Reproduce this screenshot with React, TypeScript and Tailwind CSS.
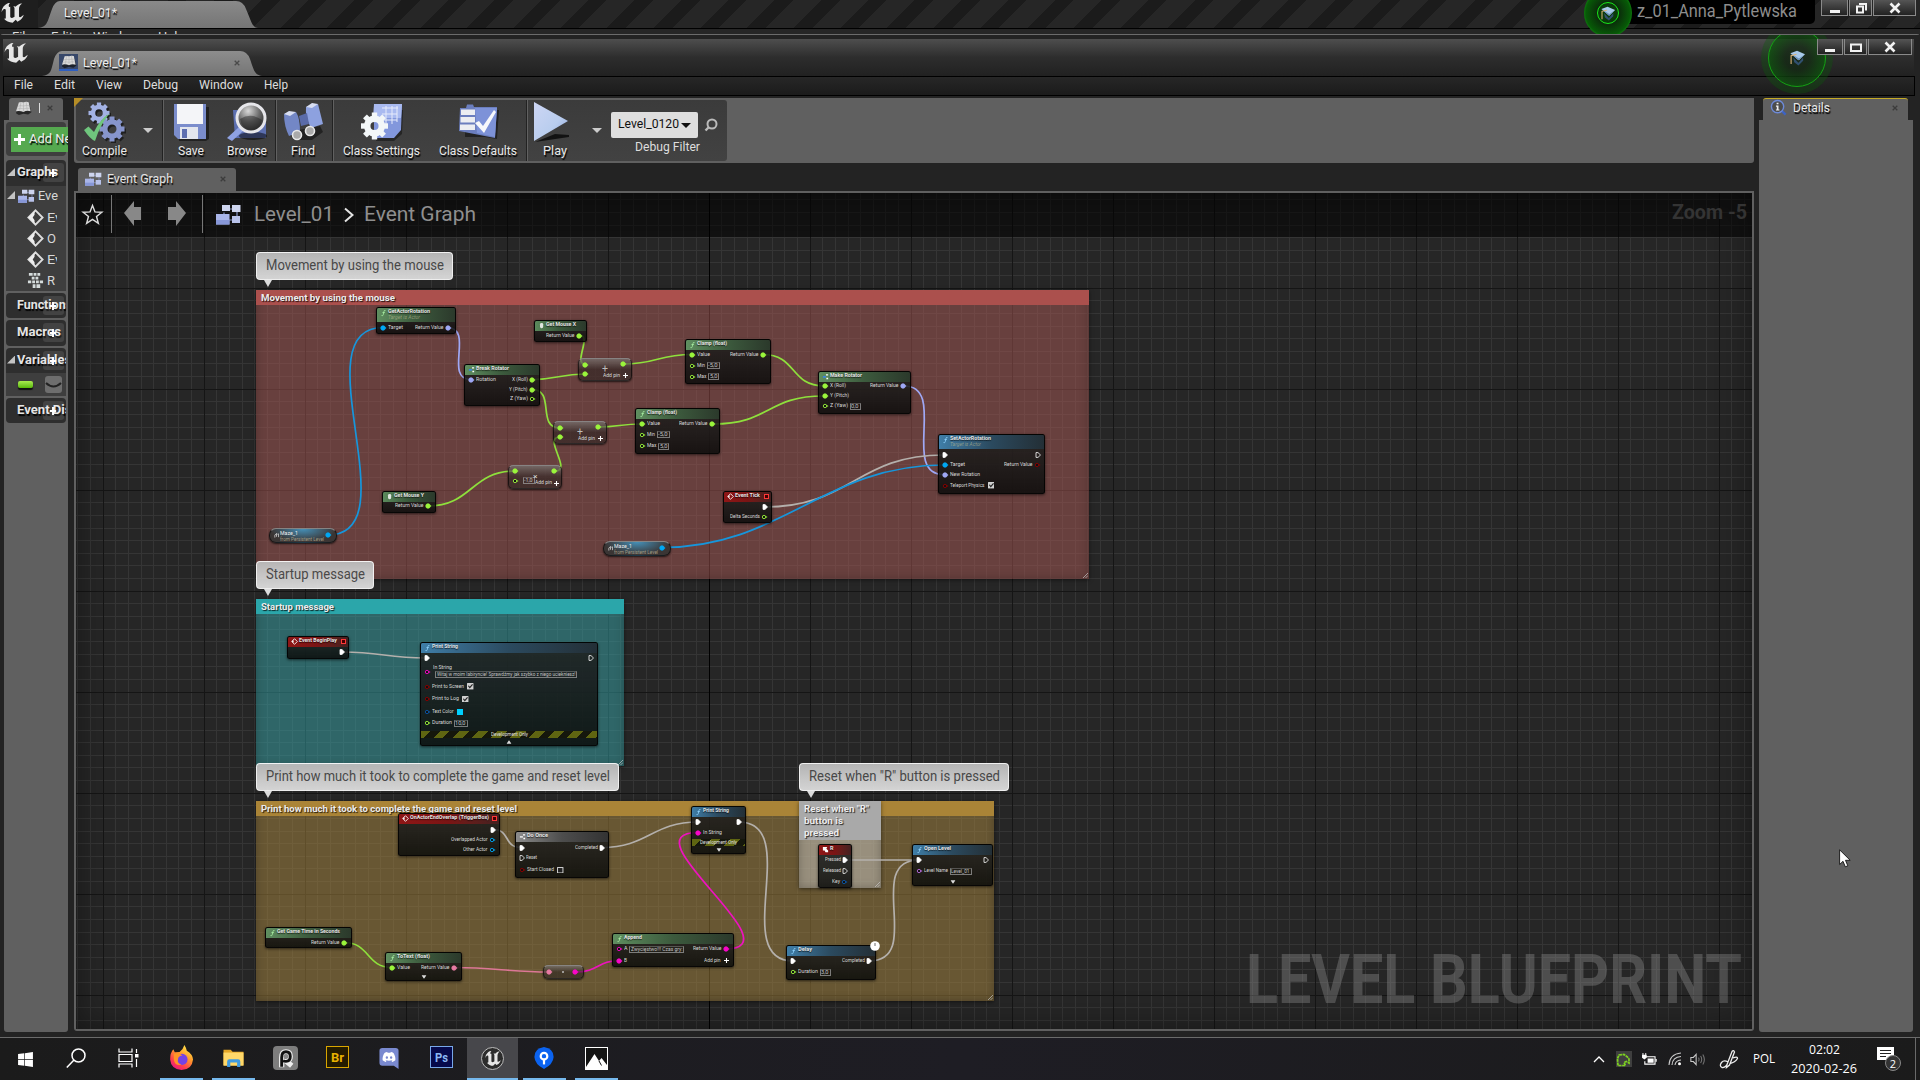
import React, { useLayoutEffect, useRef } from "react";
import { FaDiscord, FaWindows } from "react-icons/fa";

/* Text squeezed or stretched horizontally to an exact width. */
function Fit({ w, className = "", children }: { w: number; className?: string; children: React.ReactNode }) {
  const ref = useRef<HTMLSpanElement>(null);
  useLayoutEffect(() => {
    const el = ref.current;
    if (el && el.offsetWidth) {
      el.style.transform = `scaleX(${w / el.getBoundingClientRect().width})`;
    }
  }, [w]);
  return (
    <span className={"block shrink-0 leading-none " + className} style={{ width: w }}>
      <span ref={ref} className="inline-block origin-left whitespace-nowrap leading-none">
        {children}
      </span>
    </span>
  );
}

const SH = "[text-shadow:1px_2px_1px_#000]";
const GREEN = "#9bf53c";
const BLUE = "#00a8f4";
const LILAC = "#9fa8f5";
const RED = "#8b0000";
const MAGENTA = "#f907c8";
const PINK = "#e77ba3";
const WHITE = "#ffffff";
const NAVY = "#0b57a8";
const PURPLE = "#b96de0";

const U_PATH =
  "M19.13 13.729c-.206.997-1.126 3.557-4.06 4.942l-1.179-1.325-1.988 2a7.338 7.338 0 0 1-5.804-2.978 2.859 2.859 0 0 0 .65.123c.326.006.678-.114.678-.66v-5.394a.89.89 0 0 0-1.116-.89c-.92.212-1.656 2.509-1.656 2.509a7.304 7.304 0 0 1 2.528-5.597 7.408 7.408 0 0 1 3.73-1.721c-1.006.573-1.57 1.507-1.57 2.29 0 1.262.76 1.109.984.923v7.28a1.157 1.157 0 0 0 .148.256 1.075 1.075 0 0 0 .88.445c.76 0 1.747-.868 1.747-.868V9.172c0-.6-.452-1.324-.905-1.572 0 0 .838-.149 1.484.346a5.537 5.537 0 0 1 .387-.425c1.508-1.48 2.929-1.902 4.112-2.112 0 0-2.151 1.69-2.151 3.96 0 1.687.043 5.801.043 5.801.799.771 1.986-.342 3.059-1.441Z";

function ULogo({ className }: { className: string }) {
  return (
    <svg viewBox="4.3 5.2 15 14.4" className={className} preserveAspectRatio="none">
      <path d={U_PATH} fill="#e6e6e6" />
    </svg>
  );
}

function Cross({ className = "" }: { className?: string }) {
  return (
    <svg viewBox="0 0 6 6" className={"h-[6px] w-[6px] shrink-0 " + className}>
      <path d="M0.7 0.7L5.3 5.3M5.3 0.7L0.7 5.3" stroke="#3c3c3c" strokeWidth="1.3" />
    </svg>
  );
}

function BookIcon({ className }: { className: string }) {
  return (
    <svg viewBox="0 0 18 16" className={className}>
      <path d="M1 13L3.5 3L15 3L17.5 12L14 14.5L9 13.5L4 15Z" fill="#111" opacity=".7" />
      <path d="M1 11L4 1.5Q6.5 .5 9 1.5Q11.5 .3 14.5 1.2L16.6 11Q12.5 9.8 9 11.6Q5 10 1 11Z" fill="#dadada" />
      <path d="M9 1.5V11.4M3 5.5Q6 4.5 9 5.3Q12 4.3 15.4 5M2.2 8.5Q5.5 7.3 9 8.4Q12.5 7.2 16 8M6.3 1L4.8 10.3M11.8 1L13 10" stroke="#a8a8a8" strokeWidth=".5" fill="none" />
    </svg>
  );
}

function GraphIcon({ className }: { className: string }) {
  return (
    <svg viewBox="0 0 26 21" className={className}>
      <path d="M9 8.5V12M12 5H18M14 16H18M22 8V12" stroke="#8793c4" strokeWidth="1.2" />
      <path d="M7 1H15V7H7ZM17 1H25.500V8H17Z" fill="#cdd4ee" />
      <path d="M17 12H25V19H17Z" fill="#b8c2ea" />
      <path d="M1 10H14.500V20.500H1Z" fill="#a9b5e8" />
      <path d="M1 16H14.500V20.500H1Z" fill="#8797d8" />
    </svg>
  );
}

function Cap({ className }: { className: string }) {
  return (
    <svg viewBox="0 0 18 17" className={className}>
      <path d="M4.500 8L10 13.500L15 8V11.500L10 16.500L5.500 13Z" fill="#31506f" />
      <path d="M1.500 3.500L8.500 .8L17 4.500L10.500 11L9 10Z" fill="#a8c9ea" />
      <path d="M1.500 3.500L10 11L17 4.500L10.500 9Z" fill="#6b93bd" />
      <path d="M8 4.500L2.200 6V15" stroke="#d8b075" strokeWidth="1.200" fill="none" />
    </svg>
  );
}

function GearPath({ cx, cy, r, fill, n = 8, hole = 0.36 }: { cx: number; cy: number; r: number; fill: string; n?: number; hole?: number }) {
  const teeth = Array.from({ length: n }, (_, i) => (i * 360) / n);
  return (
    <g>
      {teeth.map((a) => (
        <rect key={a} x={cx - r * 0.2} y={cy - r} width={r * 0.4} height={r * 0.5} fill={fill} transform={`rotate(${a} ${cx} ${cy})`} />
      ))}
      <circle cx={cx} cy={cy} r={r * (0.39 + hole / 2)} fill="none" stroke={fill} strokeWidth={r * (0.78 - hole)} />
    </g>
  );
}

function CompileIcon() {
  return (
    <svg viewBox="0 0 44 42" className="h-[42px] w-[44px]">
      <g opacity=".5" transform="translate(1.500 2)">
        <GearPath cx={16} cy={12} r={10.500} fill="#000" />
        <GearPath cx={29} cy={28} r={12.500} fill="#000" />
      </g>
      <GearPath cx={16} cy={12} r={10.500} fill="#a3b2e4" />
      <GearPath cx={29} cy={28} r={12.500} fill="#8795cc" />
      <path d="M1 29L5.500 25.500L11 31Q17 18 26.500 12.500Q17 24 12 40Q7 38 1 29Z" fill="#6fc57d" />
    </svg>
  );
}
function SaveIcon() {
  return (
    <svg viewBox="0 0 36 38" className="h-[38px] w-[36px]">
      <path d="M3 4H36V36L33 38H6Z" fill="#000" opacity=".45" />
      <path d="M1 1H33V36H5L1 32Z" fill="#7b8dcc" />
      <path d="M4 1H30V21H4Z" fill="#f4f5f8" />
      <path d="M7 24H25V36H7Z" fill="#e3e6ee" />
      <path d="M9 26H14V35H9Z" fill="#5e6fb0" />
    </svg>
  );
}
function BrowseIcon() {
  return (
    <svg viewBox="0 0 42 40" className="h-[40px] w-[42px]">
      <defs>
        <radialGradient id="lens" cx=".4" cy=".25" r=".8">
          <stop offset="0" stopColor="#d8d8d8" />
          <stop offset=".5" stopColor="#6c6c6c" />
          <stop offset="1" stopColor="#222" />
        </radialGradient>
      </defs>
      <path d="M7 8H15L18 11H40V36H9Z" fill="#5c6fb0" />
      <ellipse cx="27" cy="34" rx="14" ry="4" fill="#000" opacity=".5" />
      <path d="M1 36L13 25L17 29L6 39Z" fill="#8fa2e2" />
      <circle cx="25" cy="16" r="14" fill="url(#lens)" stroke="#e6e6ea" strokeWidth="3" />
      <path d="M14 17Q25 10 36 18Q34 28 25 28Q16 28 14 17Z" fill="#222" opacity=".45" />
    </svg>
  );
}
function FindIcon() {
  return (
    <svg viewBox="0 0 42 40" className="h-[40px] w-[42px]">
      <path d="M6 30L38 24L41 30L30 38H12Z" fill="#000" opacity=".45" />
      <path d="M2 12L14 10Q18 16 18 30L7 34Q2 24 2 12Z" fill="#7387c6" />
      <path d="M24 5L36 2L41 22L29 26Q23 15 24 5Z" fill="#8da1df" />
      <path d="M17 14L25 11L27 22L19 24Z" fill="#5a6ba8" />
      <path d="M2 12L7 9L14 10L8 14ZM24 5L30 1L36 2L30 6Z" fill="#d8def2" />
      <circle cx="15" cy="33" r="4.500" fill="#aaa" stroke="#e9e9e9" strokeWidth="1.600" />
      <circle cx="28" cy="29" r="4.500" fill="#aaa" stroke="#e9e9e9" strokeWidth="1.600" />
    </svg>
  );
}
function SettingsIcon() {
  return (
    <svg viewBox="0 0 44 40" className="h-[40px] w-[44px]">
      <path d="M18 8H43L42 32L34 39H16Z" fill="#000" opacity=".4" />
      <path d="M14 2H42L41 28L34 36H14Z" fill="#8297dc" />
      <path d="M14 2H42L41 16H13Z" fill="#a9baf0" />
      <path d="M22 6H38M22 12H37M22 18H37M26 4V22M32 4V22M37 4V20" stroke="#e6ebfb" strokeWidth="1" />
      <GearPath cx={14.500} cy={24} r={13.500} fill="#f3f7f8" hole={0.3} />
    </svg>
  );
}
function DefaultsIcon() {
  return (
    <svg viewBox="0 0 42 40" className="h-[40px] w-[42px]">
      <path d="M8 8H42L40 37L28 35H8Z" fill="#000" opacity=".45" />
      <path d="M3 6H9L10 2.500H16L17 5H40L38 36L2 29Z" fill="#6b7ebe" />
      <path d="M18 6H40L38 35L20 31Z" fill="#7d92d8" />
      <path d="M4 7.500H18V13H4ZM3.500 15H18V20.500H3.500ZM3 22.500H18V28H3Z" fill="#eceef2" />
      <path d="M18 21L22 19L26 24L37 8L39 10L27 31Z" fill="#f7f8fb" />
    </svg>
  );
}
function PlayIcon() {
  return (
    <svg viewBox="0 0 38 42" className="-ml-[6px] h-[42px] w-[38px]">
      <defs>
        <linearGradient id="playg" x1="0" y1="0" x2="1" y2="1">
          <stop offset="0" stopColor="#cdd6f4" />
          <stop offset=".6" stopColor="#b9cdee" />
          <stop offset="1" stopColor="#8ea3dc" />
        </linearGradient>
      </defs>
      <path d="M2 41L36 36V34L22 33Z" fill="#000" opacity=".7" />
      <path d="M1 1L35 20L1 40Z" fill="url(#playg)" />
    </svg>
  );
}

function Tool({ w, label, lw, icon }: { w: number; label: string; lw: number; icon: React.ReactNode }) {
  return (
    <div className="flex h-full shrink-0 flex-col items-center" style={{ width: w }}>
      <div className="flex h-[43px] items-center justify-center pt-[1px]">{icon}</div>
      <Fit w={lw} className={"pt-[1px] text-[13.500px] text-[#e8e8e8] " + SH}>
        {label}
      </Fit>
    </div>
  );
}
function Sep() {
  return <div className="h-full w-[2px] shrink-0 border-l border-[#222] bg-[#616161]" />;
}
function Down({ className = "" }: { className?: string }) {
  return <div className={"h-0 w-0 border-x-[5px] border-t-[5px] border-x-transparent " + className} />;
}

/* ---------- node graph ---------- */

function Pin({ kind, c }: { kind: string; c: string }) {
  if (kind === "exec" || kind === "execo")
    return (
      <svg viewBox="0 0 6 6" className="h-[6px] w-[6px] shrink-0">
        <path d="M1 .6H3L5.500 3L3 5.400H1Z" fill={kind === "exec" ? "#fff" : "none"} stroke="#fff" strokeWidth=".8" />
      </svg>
    );
  return (
    <svg viewBox="0 0 7 6" className="h-[6px] w-[7px] shrink-0">
      <circle cx="3" cy="3" r={kind === "full" ? 2.200 : 1.700} fill={kind === "full" ? c : "#111"} stroke={c} strokeWidth=".9" />
      <path d="M5.200 2L6.500 3L5.200 4Z" fill={c} />
    </svg>
  );
}

function ValueBox({ text, w }: { text: string; w: number }) {
  return (
    <div className="flex h-[7px] items-center justify-center border border-[#a5a5a5]/70 border-t-[#a5a5a5]/40 text-[5px] text-[#c4c4c4]" style={{ width: w }}>
      <Fit w={w - 3.5}>{text}</Fit>
    </div>
  );
}

type Side = { k?: string; c?: string; t?: string; w?: number; box?: string; bw?: number; chk?: "on" | "off"; sw?: string; plus?: boolean };
type RowT = { y: number; l?: Side; r?: Side };
type NodeT = {
  x: number;
  y: number;
  w: number;
  h: number;
  hh?: number;
  kind: "pure" | "func" | "event" | "macro" | "input";
  title: string;
  tw: number;
  sub?: string;
  sw?: number;
  rows: RowT[];
  dev?: number;
  arrow?: { y: number; up?: boolean };
};

const HEAD: Record<string, string> = {
  pure: "bg-linear-to-r from-[#5f8f60] via-[#3c5a3d] to-[#2b392b]",
  input: "bg-linear-to-r from-[#5b8a5c] via-[#38573a] to-[#2b392b]",
  func: "bg-linear-to-r from-[#3f7ea8] via-[#2b4a5f] to-[#232f36]",
  event: "bg-linear-to-r from-[#8f1616] via-[#7a1414] to-[#432020]",
  macro: "bg-linear-to-r from-[#8c8c8c] via-[#4d4d4d] to-[#333]",
};

function HeadIcon({ kind, title }: { kind: string; title: string }) {
  if (title === "R")
    return (
      <svg viewBox="0 0 8 8" className="h-[7px] w-[7px]">
        <path d="M1 1H6L5 3L7 5V7H4L3 5H1Z" fill="#fff" />
      </svg>
    );
  if (kind === "event")
    return (
      <svg viewBox="0 0 8 8" className="h-[7px] w-[7px]">
        <path d="M4 .8L7.200 4L4 7.200L.8 4Z" fill="none" stroke="#fff" strokeWidth="1" />
        <path d="M3 2.500L.8 4L3 5.500Z" fill="#fff" />
      </svg>
    );
  if (kind === "input")
    return (
      <svg viewBox="0 0 8 8" className="h-[7px] w-[7px]">
        <rect x="2.300" y="1" width="3.600" height="6" rx="1.700" fill="#dfe6e0" />
      </svg>
    );
  if (kind === "macro" || title.includes("Rotator"))
    return (
      <svg viewBox="0 0 8 8" className="h-[7px] w-[7px]">
        <path d="M4.500 1.500H7V2.800H4.500Z" fill="#fff" />
        <path d="M1 3.500H4.500V5.500H1Z" fill={kind === "macro" ? "#ddd" : "#3d86e0"} />
        <path d="M5 5.500H7V7H5Z" fill="#fff" />
      </svg>
    );
  return (
    <svg viewBox="0 0 8 8" className="h-[8px] w-[7px]">
      <path d="M6.300 1.200Q4.600 .4 4.400 2.600L3.700 6Q3.400 7.600 1.700 6.900M2.800 3.500H5.600" fill="none" stroke={kind === "func" ? "#8fd4ff" : "#a9f0a3"} strokeWidth=".9" />
    </svg>
  );
}

function Label({ s }: { s: Side }) {
  return s.t ? (
    <Fit w={s.w ?? 10} className="text-[5.800px] text-[#dadada]">
      {s.t}
    </Fit>
  ) : null;
}

function NodeBox({ n }: { n: NodeT }) {
  const hh = n.hh ?? 9.5;
  let bottom = hh + 1;
  return (
    <div
      className="absolute overflow-hidden rounded-[2.500px] border border-black/80 bg-[#0b0c0a]/85 bg-linear-to-b from-white/8 to-transparent shadow-[0_1px_3px_rgba(0,0,0,0.6)]"
      style={{ left: n.x, top: n.y, width: n.w, height: n.h }}
    >
      <div className={"flex items-start pl-[3px] " + HEAD[n.kind]} style={{ height: hh }}>
        <div className="pt-[1px]">
          <HeadIcon kind={n.kind} title={n.title} />
        </div>
        <div className="flex grow flex-col pt-[0.500px] pl-[1px]">
          <Fit w={n.tw} className="text-[5.900px] font-bold text-[#e4e4e4] [text-shadow:0_1px_1px_rgba(0,0,0,0.7)]">
            {n.title}
          </Fit>
          {n.sub && (
            <Fit w={n.sw ?? 30} className="mt-[1px] text-[5.600px] text-[#b5b58c]/70 italic">
              {n.sub}
            </Fit>
          )}
        </div>
        {n.kind === "event" && n.title !== "R" && <div className="mt-[2px] mr-[2px] h-[5px] w-[5px] border border-[#ff3838] bg-[#400]" />}
      </div>
      {n.rows.map((r, i) => {
        const top = r.y - n.y - 4;
        const mt = top - bottom;
        bottom = top + 8;
        return (
          <div key={i} className="flex h-[8px] items-center justify-between pr-[3.500px] pl-[2.500px]" style={{ marginTop: mt }}>
            <div className="flex items-center gap-[1.500px]">
              {r.l && (
                <>
                  {r.l.k && <Pin kind={r.l.k} c={r.l.c ?? WHITE} />}
                  <Label s={r.l} />
                  {r.l.box && <ValueBox text={r.l.box} w={r.l.bw ?? 12} />}
                  {r.l.sw && <div className="ml-[1.500px] h-[6px] w-[6px]" style={{ background: r.l.sw }} />}
                  {r.l.chk && (
                    <svg viewBox="0 0 7 7" className="ml-[1.500px] h-[6.500px] w-[6.500px]">
                      <rect x=".6" y=".6" width="5.800" height="5.800" fill={r.l.chk === "on" ? "#ccc" : "#222"} stroke="#ddd" strokeWidth="1" />
                      {r.l.chk === "on" && <path d="M1.500 3L3 5L6 1.500" fill="none" stroke="#222" strokeWidth="1.200" />}
                    </svg>
                  )}
                </>
              )}
            </div>
            <div className="flex items-center gap-[1px]">
              {r.r && (
                <>
                  <Label s={r.r} />
                  {r.r.k && <Pin kind={r.r.k} c={r.r.c ?? WHITE} />}
                  {r.r.plus && <Plus />}
                </>
              )}
            </div>
          </div>
        );
      })}
      {n.dev && (
        <div
          className="absolute inset-x-0 flex h-[7px] items-center justify-center bg-[repeating-linear-gradient(135deg,#5f6511_0_7px,#15170c_7px_13.500px)]"
          style={{ top: n.dev - n.y - 1 }}
        >
          <Fit w={37} className="text-[5.400px] text-[#e0e0e0]">
            Development Only
          </Fit>
        </div>
      )}
      {n.arrow && (
        <svg viewBox="0 0 6 4" className="absolute left-1/2 h-[4px] w-[5px] -translate-x-1/2" style={{ top: n.arrow.y - n.y - 3 }}>
          <path d={n.arrow.up ? "M0 4L3 0L6 4Z" : "M0 0H6L3 4Z"} fill="#ddd" />
        </svg>
      )}
    </div>
  );
}

function Plus() {
  return (
    <svg viewBox="0 0 6 6" className="mr-[1px] ml-[2px] h-[5px] w-[5px] shrink-0">
      <path d="M3 0V6M0 3H6" stroke="#fff" strokeWidth="1.300" />
    </svg>
  );
}

const RV = (c: string): Side => ({ k: "full", c, t: "Return Value", w: 28.5 });

const NODES: NodeT[] = [
  { x: 376, y: 307, w: 80, h: 27, hh: 14, kind: "pure", title: "GetActorRotation", tw: 42, sub: "Target is Actor", sw: 32, rows: [{ y: 327.5, l: { k: "full", c: BLUE, t: "Target", w: 15 }, r: RV(LILAC) }] },
  { x: 534, y: 320, w: 53, h: 22, kind: "input", title: "Get Mouse X", tw: 30, rows: [{ y: 335.5, r: RV(GREEN) }] },
  { x: 464, y: 364, w: 76, h: 42, kind: "pure", title: "Break Rotator", tw: 33, rows: [
    { y: 379.5, l: { k: "full", c: LILAC, t: "Rotation", w: 20 }, r: { k: "full", c: GREEN, t: "X (Roll)", w: 16 } },
    { y: 389.5, r: { k: "full", c: GREEN, t: "Y (Pitch)", w: 18.500 } },
    { y: 399, r: { k: "open", c: GREEN, t: "Z (Yaw)", w: 18 } } ] },
  { x: 382, y: 491, w: 54, h: 22, kind: "input", title: "Get Mouse Y", tw: 30, rows: [{ y: 506, r: RV(GREEN) }] },
  { x: 685, y: 339, w: 86, h: 45, kind: "pure", title: "Clamp (float)", tw: 30, rows: [
    { y: 354.5, l: { k: "full", c: GREEN, t: "Value", w: 13 }, r: RV(GREEN) },
    { y: 365.5, l: { k: "open", c: GREEN, t: "Min", w: 8, box: "-5,0", bw: 13 } },
    { y: 376.5, l: { k: "open", c: GREEN, t: "Max", w: 9.500, box: "5,0", bw: 11 } } ] },
  { x: 635, y: 408, w: 85, h: 46, kind: "pure", title: "Clamp (float)", tw: 30, rows: [
    { y: 424, l: { k: "full", c: GREEN, t: "Value", w: 13 }, r: RV(GREEN) },
    { y: 434.5, l: { k: "open", c: GREEN, t: "Min", w: 8, box: "-5,0", bw: 13 } },
    { y: 446, l: { k: "open", c: GREEN, t: "Max", w: 9.500, box: "5,0", bw: 11 } } ] },
  { x: 818, y: 371, w: 93, h: 43, kind: "pure", title: "Make Rotator", tw: 32, rows: [
    { y: 386, l: { k: "full", c: GREEN, t: "X (Roll)", w: 16 }, r: RV(LILAC) },
    { y: 396, l: { k: "full", c: GREEN, t: "Y (Pitch)", w: 19 } },
    { y: 406, l: { k: "open", c: GREEN, t: "Z (Yaw)", w: 18, box: "0,0", bw: 11 } } ] },
  { x: 938, y: 434, w: 107, h: 60, hh: 13.5, kind: "func", title: "SetActorRotation", tw: 41, sub: "Target is Actor", sw: 31, rows: [
    { y: 455, l: { k: "exec" }, r: { k: "execo" } },
    { y: 465, l: { k: "full", c: BLUE, t: "Target", w: 15 }, r: { k: "open", c: RED, t: "Return Value", w: 28.5 } },
    { y: 474.5, l: { k: "full", c: LILAC, t: "New Rotation", w: 30 } },
    { y: 485.5, l: { k: "open", c: RED, t: "Teleport Physics", w: 34.5, chk: "on" } } ] },
  { x: 723, y: 491, w: 49, h: 32, kind: "event", title: "Event Tick", tw: 25, rows: [
    { y: 507, r: { k: "exec" } }, { y: 517, r: { k: "open", c: GREEN, t: "Delta Seconds", w: 30 } } ] },
  { x: 287, y: 636, w: 62, h: 23, kind: "event", title: "Event BeginPlay", tw: 38, rows: [{ y: 652, r: { k: "exec" } }] },
  { x: 420, y: 642, w: 178, h: 104, kind: "func", title: "Print String", tw: 26, dev: 731, arrow: { y: 742, up: true }, rows: [
    { y: 658, l: { k: "exec" }, r: { k: "execo" } },
    { y: 672, l: { k: "open", c: MAGENTA } },
    { y: 686.5, l: { k: "open", c: RED, t: "Print to Screen", w: 32, chk: "on" } },
    { y: 699, l: { k: "open", c: RED, t: "Print to Log", w: 27, chk: "on" } },
    { y: 711.5, l: { k: "open", c: NAVY, t: "Text Color", w: 21.5, sw: "#00d0ff" } },
    { y: 723, l: { k: "open", c: GREEN, t: "Duration", w: 20, box: "10,0", bw: 14 } } ] },
  { x: 398, y: 813, w: 102, h: 43, kind: "event", title: "OnActorEndOverlap (TriggerBox)", tw: 79, rows: [
    { y: 829.5, r: { k: "exec" } },
    { y: 839.5, r: { k: "open", c: BLUE, t: "Overlapped Actor", w: 36.5 } },
    { y: 849.5, r: { k: "open", c: BLUE, t: "Other Actor", w: 24.5 } } ] },
  { x: 515, y: 831, w: 94, h: 47, kind: "macro", title: "Do Once", tw: 21, rows: [
    { y: 847.5, l: { k: "exec" }, r: { k: "exec", t: "Completed", w: 23 } },
    { y: 858, l: { k: "execo", t: "Reset", w: 11 } },
    { y: 870, l: { k: "open", c: RED, t: "Start Closed", w: 27, chk: "off" } } ] },
  { x: 265, y: 927, w: 87, h: 21, kind: "pure", title: "Get Game Time in Seconds", tw: 63, rows: [{ y: 942.5, r: RV(GREEN) }] },
  { x: 385, y: 952, w: 77, h: 29, kind: "pure", title: "ToText (float)", tw: 33, arrow: { y: 977 }, rows: [{ y: 967.5, l: { k: "full", c: GREEN, t: "Value", w: 13 }, r: RV(PINK) }] },
  { x: 612, y: 933, w: 122, h: 34, kind: "pure", title: "Append", tw: 18, rows: [
    { y: 949, l: { k: "open", c: MAGENTA, t: "A", w: 3.5, box: "Zwycięstwo!!! Czas gry:", bw: 55 }, r: RV(MAGENTA) },
    { y: 960.5, l: { k: "full", c: MAGENTA, t: "B", w: 3 }, r: { t: "Add pin", w: 16.5, plus: true } } ] },
  { x: 691, y: 806, w: 55, h: 48, kind: "func", title: "Print String", tw: 26, dev: 839, arrow: { y: 849.5 }, rows: [
    { y: 822, l: { k: "exec" }, r: { k: "exec" } },
    { y: 832.5, l: { k: "full", c: MAGENTA, t: "In String", w: 19 } } ] },
  { x: 818, y: 844, w: 34, h: 44, kind: "event", title: "R", tw: 3.5, rows: [
    { y: 860, r: { k: "exec", t: "Pressed", w: 16 } },
    { y: 871, r: { k: "execo", t: "Released", w: 18 } },
    { y: 881.5, r: { k: "open", c: NAVY, t: "Key", w: 8 } } ] },
  { x: 912, y: 844, w: 81, h: 42, kind: "func", title: "Open Level", tw: 27, arrow: { y: 882 }, rows: [
    { y: 860, l: { k: "exec" }, r: { k: "execo" } },
    { y: 871, l: { k: "open", c: PURPLE, t: "Level Name", w: 24, box: "Level_01", bw: 22 } } ] },
  { x: 786, y: 945, w: 90, h: 35, kind: "func", title: "Delay", tw: 14, rows: [
    { y: 961, l: { k: "exec" }, r: { k: "exec", t: "Completed", w: 23 } },
    { y: 972, l: { k: "open", c: GREEN, t: "Duration", w: 20, box: "3,0", bw: 11 } } ] },
];

const GREY = "#b4b0ac";
const LIME = "#8ee03c";
const WIRES: [number, number, number, number, number, string][] = [
  [328, 535, 383, 327.5, 84, "#1696dc"],
  [447, 327.5, 471, 379.5, 28, LILAC],
  [580, 335.5, 585, 364, 12, LIME],
  [532, 379.5, 585, 374, 25, LIME],
  [532, 389.5, 560, 428, 24, LIME],
  [555, 471, 560, 437, 18, LIME],
  [428, 506, 515, 471, 44, LIME],
  [623, 364, 692, 354.5, 35, LIME],
  [598, 427, 641, 424, 20, LIME],
  [763, 354.5, 824, 386, 34, LIME],
  [713, 424, 824, 396, 58, LIME],
  [904, 386, 944, 474.5, 44, LILAC],
  [764, 507, 944, 455, 88, GREY],
  [662, 547.5, 944, 465, 120, "#1696dc"],
  [342, 652, 426, 658, 40, GREY],
  [493, 829.5, 521, 847.5, 18, GREY],
  [602, 847.5, 698, 822, 46, GREY],
  [739, 822, 793, 961, 64, GREY],
  [725, 949, 698, 832.5, 74, "#ee12bf"],
  [845, 860, 919, 860, 20, GREY],
  [869, 961, 919, 860, 56, GREY],
  [344, 942.5, 392, 967.5, 26, LIME],
  [454, 967.5, 549, 972, 40, "#dc7796"],
  [576, 972, 620, 960.5, 22, "#ee12bf"],
];

function Grid() {
  const step = 12.625;
  const cols = Array.from({ length: 136 }, (_, i) => i - 51);
  const rows = Array.from({ length: 70 }, (_, i) => i - 8);
  return (
    <svg className="absolute inset-0 h-[1080px] w-[1920px]" shapeRendering="crispEdges">
      {cols.map((i) => (
        <rect key={"c" + i} x={Math.floor(709.2 + i * step)} y="193" width="1" height="840" fill={i % 8 === 0 ? "#151515" : "#353535"} />
      ))}
      {rows.map((i) => (
        <rect key={"r" + i} x="76" y={Math.floor(288.2 + i * step)} width="1680" height="1" fill={i % 8 === 0 ? "#151515" : "#353535"} />
      ))}
      {cols.filter((i) => i % 8 === 0).map((i) => (
        <rect key={"m" + i} x={Math.floor(709.2 + i * step)} y="193" width="1" height="840" fill={i === 0 ? "#000" : "#151515"} />
      ))}
    </svg>
  );
}

function Comment({ x, y, w, h, hh, title, tw, head, body }: { x: number; y: number; w: number; h: number; hh: number; title: string[]; tw: number[]; head: string; body: string }) {
  return (
    <div className={"absolute shadow-[inset_0_0_10px_rgba(0,0,0,0.25),0_1px_4px_rgba(0,0,0,0.5)] " + body} style={{ left: x, top: y, width: w, height: h }}>
      <div className={"flex flex-col gap-[2.500px] pt-[3px] pl-[4.500px] " + head} style={{ height: hh }}>
        {title.map((t, i) => (
          <Fit key={t} w={tw[i]} className="text-[9.500px] font-bold text-[#ececec] [text-shadow:1px_1px_1px_rgba(0,0,0,0.8)]">
            {t}
          </Fit>
        ))}
      </div>
      <svg viewBox="0 0 6 6" className="absolute right-[1px] bottom-[1px] h-[5px] w-[5px]">
        <path d="M0 6L6 0M3 6L6 3" stroke="#ccc" strokeWidth=".8" />
      </svg>
    </div>
  );
}

function Bubble({ x, y, w, h, tw, children }: { x: number; y: number; w: number; h: number; tw: number; children: string }) {
  return (
    <div className="absolute" style={{ left: x, top: y }}>
      <div className="flex items-center justify-center rounded-[4px] border border-white/90 bg-linear-to-b from-[#bcbcbc] to-[#dedede] opacity-95" style={{ width: w, height: h }}>
        <Fit w={tw} className="text-[14.500px] text-[#4a4a4a]">
          {children}
        </Fit>
      </div>
      <div className="ml-[8px] h-0 w-0 border-x-[4px] border-t-[7px] border-x-transparent border-t-[#dcdcdc]" />
    </div>
  );
}

type Spot = { x: number; y: number; w?: number; c?: string };
function At({ x, y, w, c = "#dadada", size = "text-[5.800px]", children }: Spot & { size?: string; children: string }) {
  return (
    <div className={"absolute flex -translate-y-1/2 items-center " + size} style={{ left: x, top: y, color: c }}>
      <Fit w={w ?? 10}>{children}</Fit>
    </div>
  );
}
function Capsule({ x, y, w, h, round, blue, children }: { x: number; y: number; w: number; h: number; round: string; blue?: boolean; children: React.ReactNode }) {
  return (
    <div
      className={
        "absolute border border-black/60 border-t-[#999]/80 shadow-[0_1px_2px_rgba(0,0,0,0.7)] " +
        round +
        (blue ? " bg-[radial-gradient(ellipse_at_50%_0%,#4590b8_0%,#3a3534_70%)]" : " bg-linear-to-b from-[#77706d]/80 via-[#2c2422]/60 to-[#2c2422]/60")
      }
      style={{ left: x, top: y, width: w, height: h }}
    >
      <div className="relative -ml-px h-full w-full">{children}</div>
    </div>
  );
}
function PinAt({ x, y, c, open }: { x: number; y: number; c: string; open?: boolean }) {
  return (
    <div className="absolute" style={{ left: x - 3, top: y - 3 }}>
      <Pin kind={open ? "open" : "full"} c={c} />
    </div>
  );
}

function Compact() {
  const adds = [
    { x: 578, y: 358 },
    { x: 553, y: 421 },
  ];
  return (
    <>
      {adds.map((a) => (
        <Capsule key={a.x} x={a.x} y={a.y} w={54} h={23} round="rounded-[5px]">
          <PinAt x={6.500} y={5.500} c={GREEN} />
          <PinAt x={6.500} y={15} c={GREEN} />
          <PinAt x={44.500} y={5} c={GREEN} />
          <At x={23.500} y={10} w={6} c="#bbb" size="text-[10px]">+</At>
          <At x={24.500} y={16.500} w={17}>Add pin</At>
          <div className="absolute top-[14px] left-[43px]"><Plus /></div>
        </Capsule>
      ))}
      <Capsule x={508} y={465} w={54} h={24} round="rounded-[5px]">
        <PinAt x={7} y={5} c={GREEN} />
        <PinAt x={7} y={15} c={GREEN} open />
        <PinAt x={46} y={5} c={GREEN} />
        <div className="absolute top-[11px] left-[14.500px]"><ValueBox text="-1,0" w={12} /></div>
        <At x={25} y={11} w={4.500} c="#ddd" size="text-[8px]">×</At>
        <At x={26.500} y={17} w={17}>Add pin</At>
        <div className="absolute top-[15px] left-[44px]"><Plus /></div>
      </Capsule>
      {[{ x: 269, y: 528 }, { x: 603, y: 541 }].map((m) => (
        <Capsule key={m.x} x={m.x} y={m.y} w={68} h={15} round="rounded-[7px]" blue>
          <svg viewBox="0 0 6 7" className="absolute top-[3px] left-[5px] h-[7px] w-[5px]">
            <path d="M1 6V3L3 1V5M4 2L5.500 1.500V5.500" fill="none" stroke="#ddd" strokeWidth=".9" />
          </svg>
          <At x={11} y={5} w={18} c="#eee">Maze_1</At>
          <At x={11} y={10.500} w={44} c="#a19b84" size="text-[5.400px]">from Persistent Level</At>
          <PinAt x={59} y={6} c={BLUE} />
        </Capsule>
      ))}
      <Capsule x={543} y={965} w={41} h={14} round="rounded-[5px]">
        <PinAt x={6} y={6} c={PINK} />
        <div className="absolute top-[5px] left-[19px] h-[2px] w-[2px] rounded-full bg-[#bbb]" />
        <PinAt x={32} y={6} c={MAGENTA} />
      </Capsule>
    </>
  );
}

function GraphCanvas() {
  return (
    <div className="relative h-[836px] w-[1676px] overflow-hidden bg-[#262626]">
      <div className="absolute top-[-193px] left-[-76px] h-[1080px] w-[1920px]">
        <Grid />
        <Comment x={256} y={290} w={832.500} h={289} hh={15} title={["Movement by using the mouse"]} tw={[134]} head="bg-[#ab504d]" body="bg-[#aa5956]/50" />
        <Comment x={256} y={599} w={367.500} h={167} hh={15} title={["Startup message"]} tw={[73]} head="bg-[#2ba6aa]" body="bg-[#37a5aa]/50" />
        <Comment x={256} y={801} w={737.500} h={200} hh={15} title={["Print how much it took to complete the game and reset level"]} tw={[256]} head="bg-[#aa8437]" body="bg-[#aa873f]/50" />
        <Comment x={799} y={801} w={81.500} h={87} hh={39} title={['Reset when "R"', "button is", "pressed"]} tw={[65, 39, 35]} head="bg-[#a9a9a9]" body="bg-[#c8c8c8]/50" />
        <svg className="absolute inset-0 h-[1080px] w-[1920px]">
          {WIRES.map(([a, b, c, d, k, col], i) => (
            <path key={i} d={`M${a} ${b}C${a + k} ${b} ${c - k} ${d} ${c} ${d}`} fill="none" stroke={col} strokeWidth="1.700" />
          ))}
        </svg>
        {NODES.map((n) => (
          <NodeBox key={n.x + "-" + n.y} n={n} />
        ))}
        <At x={433} y={668} w={19}>In String</At>
        <div className="absolute top-[671px] left-[435px]">
          <ValueBox text="Witaj w moim labiryncie! Sprawdźmy jak szybko z niego uciekniesz!" w={142} />
        </div>
        <Compact />
        <svg viewBox="0 0 10 10" className="absolute top-[941px] left-[869.500px] h-[10px] w-[10px]">
          <circle cx="5" cy="5" r="4.800" fill="#fff" />
          <path d="M5 2V5" stroke="#444" strokeWidth=".8" />
        </svg>
        <Bubble x={256} y={252} w={197} h={28} tw={178}>Movement by using the mouse</Bubble>
        <Bubble x={256} y={561} w={118} h={28} tw={99}>Startup message</Bubble>
        <Bubble x={256} y={763} w={363} h={28} tw={344}>Print how much it took to complete the game and reset level</Bubble>
        <Bubble x={799} y={763} w={210} h={28} tw={191}>Reset when "R" button is pressed</Bubble>
        <Fit w={496} className="absolute top-[946px] left-[1246px] text-[68px] font-bold text-[#8c8c8c]/40">
          LEVEL BLUEPRINT
        </Fit>
      </div>
      <div className="absolute inset-0 shadow-[inset_0_0_34px_rgba(0,0,0,0.45)]" />
      <div className="absolute inset-x-0 top-0 flex h-[44px] items-center bg-black/55 pb-[2px]">
        <svg viewBox="0 0 24 24" className="ml-[5px] h-[23px] w-[23px]">
          <path d="M12 2.500L14.600 9.300L21.800 9.600L16.200 14.100L18.100 21.200L12 17.200L5.900 21.200L7.800 14.100L2.200 9.600L9.400 9.300Z" fill="none" stroke="#ddd" strokeWidth="1.500" />
        </svg>
        <div className="ml-[7px] h-[38px] w-px bg-[#777]" />
        <svg viewBox="0 0 18 26" className="ml-[12px] h-[26px] w-[18px]">
          <path d="M0 12L10 0V6H17V19H10V25Z" fill="#888" />
        </svg>
        <svg viewBox="0 0 18 26" className="ml-[26px] h-[26px] w-[18px]">
          <path d="M18 12L8 0V6H0V19H8V25Z" fill="#888" />
        </svg>
        <div className="ml-[16px] h-[38px] w-px bg-[#777]" />
        <GraphIcon className="ml-[12px] h-[21px] w-[26px]" />
        <Fit w={80} className="ml-[13px] text-[20.500px] text-[#8f8f8f]">Level_01</Fit>
        <svg viewBox="0 0 10 16" className="mt-[2px] ml-[10px] h-[16px] w-[10px]">
          <path d="M1 1.500L8.500 8L1 14.500" fill="none" stroke="#e4e4e4" strokeWidth="2" />
        </svg>
        <Fit w={112} className="ml-[10px] text-[20.500px] text-[#8f8f8f]">Event Graph</Fit>
        <Fit w={75} className="mr-[5px] mb-[3px] ml-auto text-[21px] font-bold text-[#343434]">Zoom -5</Fit>
      </div>
    </div>
  );
}

/* ---------- side panels ---------- */

function SectionHeader({ label, w, open, y = "h-[25px]" }: { label: string; w: number; open?: boolean; y?: string }) {
  return (
    <div className={"relative flex shrink-0 items-center overflow-hidden rounded-t-[4px] bg-[#2e2e2e] pb-[2px] " + (open ? "" : "rounded-b-[4px] ") + y}>
      <div className="flex w-[11px] shrink-0 justify-end pr-[2px]">
        {open && <div className="h-[8px] w-[8px] bg-[#c4c4c4] [clip-path:polygon(100%_0,100%_100%,0_100%)]" />}
      </div>
      <Fit w={w} className={"text-[13.500px] font-bold text-[#e4e4e4] " + SH}>{label}</Fit>
      <div className="absolute top-[3px] left-[37px] flex h-[19px] w-[21px] items-center justify-center rounded-[3px] bg-white/10">
        <svg viewBox="0 0 10 10" className="mr-[1px] h-[10px] w-[8px]">
          <path d="M5 0V10M1 5H9" stroke="#fff" strokeWidth="2.400" />
        </svg>
      </div>
    </div>
  );
}

function EventItem({ label, w, grid }: { label: string; w: number; grid?: boolean }) {
  return (
    <div className="flex h-[21px] items-center pl-[21px]">
      <svg viewBox="0 0 18 18" className="h-[17px] w-[17px] shrink-0">
        {grid ? (
          <path d="M2 1H6V4H2ZM7 1H10V4H7ZM11 1H14V4H11ZM5 5H8V8H5ZM9 5H12V8H9ZM1 9H4.500V12H1ZM5.500 9H8.500V12H5.500ZM9.500 9H12.500V12H9.500ZM13.500 9H17V12H13.500ZM6 13H9V17H6ZM10 13H14V17H10Z" fill="#d5dcdc" />
        ) : (
          <>
            <path d="M9 1.500L16.500 9L9 16.500L1.500 9Z" fill="none" stroke="#ddd" strokeWidth="2" />
            <path d="M8 2.500L1.500 9L8 15.500V12L6 9L8 6Z" fill="#eee" />
          </>
        )}
      </svg>
      <div className="ml-[3px] overflow-hidden" style={{ width: 10 }}>
        <Fit w={w} className="text-[13.500px] text-[#d8d8d8]">{label}</Fit>
      </div>
    </div>
  );
}

function LeftPanel() {
  return (
    <div className="flex w-[64px] shrink-0 flex-col">
      <div className="ml-[5px] flex h-[22px] w-[54px] shrink-0 items-center rounded-t-[3px] bg-[#606060] pb-[2px]">
        <BookIcon className="ml-[6px] h-[15px] w-[17px]" />
        <div className="ml-[7px] h-[10px] w-px bg-[#ddd]" />
        <Cross className="ml-[7px]" />
      </div>
      <div className="flex grow flex-col overflow-hidden rounded-b-[3px] bg-[#606060] pt-[2px] pr-[2px] pl-[2px]">
        <div className="mb-[4px] h-[34px] shrink-0 rounded-[4px] bg-[#3e3e3e] pt-[5px] pl-[5px]">
          <div className="flex h-[25px] w-[57px] items-center overflow-hidden bg-[#55a94f] pb-[2px]">
            <svg viewBox="0 0 12 12" className="mt-[1px] ml-[3px] h-[11px] w-[11px] shrink-0">
              <path d="M6 0V12M0 6H12" stroke="#fff" strokeWidth="3.200" />
            </svg>
            <Fit w={52} className={"ml-[4px] text-[13.500px] text-[#eee] " + SH}>Add New</Fit>
          </div>
        </div>
        <SectionHeader label="Graphs" w={41} open y="h-[26px]" />
        <div className="mb-[2px] h-[105px] shrink-0 bg-[#3e3e3e]">
          <div className="flex h-[21px] items-center pb-[1px] pl-[1px]">
            <div className="mb-[2px] h-[8px] w-[8px] bg-[#c4c4c4] [clip-path:polygon(100%_0,100%_100%,0_100%)]" />
            <GraphIcon className="ml-[2px] h-[14px] w-[18px]" />
            <Fit w={20} className="ml-[3px] text-[13.500px] text-[#d8d8d8]">Eve</Fit>
          </div>
          <EventItem label="Ev" w={15} />
          <EventItem label="O" w={9} />
          <EventItem label="Ev" w={15} />
          <EventItem label="R" w={8} grid />
        </div>
        <div className="flex flex-col gap-[2px]">
          <SectionHeader label="Functions" w={55} />
          <SectionHeader label="Macros" w={44} y="h-[26px]" />
          <div>
            <SectionHeader label="Variables" w={54} open />
            <div className="flex h-[23px] items-center bg-[#3e3e3e] pl-[12px]">
              <div className="h-[7px] w-[15px] rounded-[2px] bg-linear-to-b from-[#a9ec4d] to-[#58b800] shadow-[0_2px_1px_#111]" />
              <div className="ml-[12px] flex h-[17px] w-[17px] items-center rounded-[3px] bg-[#6e6e6e]">
                <svg viewBox="0 0 17 17" className="h-[17px] w-[17px]">
                  <path d="M1 7Q8.500 14 16 7" fill="none" stroke="#222" strokeWidth="2" />
                </svg>
              </div>
            </div>
          </div>
          <SectionHeader label="Event Dispatchers" w={106} />
        </div>
      </div>
    </div>
  );
}

function DetailsPanel() {
  return (
    <div className="flex w-[154px] shrink-0 flex-col">
      <div className="ml-[4px] flex h-[22px] w-[145px] shrink-0 items-center rounded-t-[3px] border-t border-[#c4aa26] bg-[#606060] pb-[4px]">
        <svg viewBox="0 0 18 18" className="ml-[7px] h-[17px] w-[17px]">
          <path d="M11.500 11.500L16.500 16.500" stroke="#3d63c4" strokeWidth="2.500" />
          <circle cx="8" cy="8" r="6.500" fill="#4c4c4c" stroke="#6d8ad8" strokeWidth="1.500" />
          <path d="M7 4H9V5.500H7ZM6.300 7H9V11H10V12.200H6.300V11H7.200V8.200H6.300Z" fill="#eee" />
        </svg>
        <Fit w={37} className={"ml-[6px] text-[13.500px] text-[#e8e8e8] " + SH}>Details</Fit>
        <Cross className="mr-[10px] ml-auto" />
      </div>
      <div className="grow rounded-b-[3px] bg-[#606060]" />
    </div>
  );
}

function WinButton({ w, kind }: { w: number; kind: "min" | "max" | "restore" | "close" }) {
  return (
    <div className="flex h-[16px] items-center justify-center border border-t-0 border-[#8a8a8a] bg-linear-to-b from-[#555] to-[#222]" style={{ width: w }}>
      <svg viewBox="0 0 14 12" className="h-[12px] w-[14px]">
        {kind === "min" && <path d="M2 8H12V11H2Z" fill="#f2f2f2" />}
        {kind === "max" && <path d="M2 3.500H12V10H2Z" fill="none" stroke="#f2f2f2" strokeWidth="2" />}
        {kind === "restore" && (
          <>
            <path d="M5 2H12V8.500" fill="none" stroke="#f2f2f2" strokeWidth="2" />
            <path d="M3 4.500H9V10.500H3Z" fill="none" stroke="#f2f2f2" strokeWidth="2" />
          </>
        )}
        {kind === "close" && <path d="M2.500 1.500L11.500 10.500M11.500 1.500L2.500 10.500" stroke="#f2f2f2" strokeWidth="2.600" />}
      </svg>
    </div>
  );
}

/* ---------- taskbar ---------- */

function Slot({ w, bar, active, children }: { w: number; bar?: string; active?: boolean; children: React.ReactNode }) {
  return (
    <div className={"flex h-full shrink-0 flex-col items-center " + (active ? "bg-[#47474b]" : "")} style={{ width: w }}>
      <div className="flex h-[40px] items-center justify-center">{children}</div>
      <div className={"h-[2px] " + (bar ?? "")} />
    </div>
  );
}

function Taskbar() {
  return (
    <div className="flex h-[42px] shrink-0 items-stretch bg-linear-to-r from-[#1b1b1b] via-[#1e1d24] to-[#1b1b1b]">
      <Slot w={50}><FaWindows className="mt-[2px] h-[17px] w-[17px] text-white" /></Slot>
      <Slot w={52}>
        <svg viewBox="0 0 20 20" className="h-[20px] w-[20px]">
          <circle cx="12.500" cy="7.500" r="6.500" fill="none" stroke="#fff" strokeWidth="1.500" />
          <path d="M8 12L.8 19.500" stroke="#fff" strokeWidth="1.500" />
        </svg>
      </Slot>
      <Slot w={53}>
        <svg viewBox="0 0 22 20" className="h-[20px] w-[22px]">
          <path d="M1 .5V4H14V.5M1 19.500V16H14V19.500M1 6.500H14V13.500H1ZM18.500 1V5M18.500 11V19" fill="none" stroke="#fff" strokeWidth="1.200" />
          <path d="M17 6H20.500V9.500H17Z" fill="#fff" />
        </svg>
      </Slot>
      <Slot w={52} bar="w-[43px] bg-[#76b9ed]">
        <svg viewBox="0 0 26 26" className="mb-[2px] h-[25px] w-[25px]">
          <defs>
            <linearGradient id="ffx" x1=".8" y1="0" x2=".2" y2="1">
              <stop offset="0" stopColor="#fff04d" />
              <stop offset=".4" stopColor="#ff9a2b" />
              <stop offset=".75" stopColor="#ff3b4f" />
              <stop offset="1" stopColor="#e2168a" />
            </linearGradient>
          </defs>
          <path d="M16 0Q18 3 18.500 6Q24.500 9.500 25 15Q24 25.500 13 26Q2 25 1.200 15Q1 8.500 4.500 4.500L6 7.500L11 7.200Q15 4 16 0Z" fill="url(#ffx)" />
          <circle cx="13.500" cy="15" r="5.800" fill="#7542e5" />
          <path d="M5 9Q10 7 14 11Q10 11.500 9.500 14Q8 19 13 20.500Q6 22 5 15Z" fill="#ff9526" />
        </svg>
      </Slot>
      <Slot w={52} bar="w-[43px] bg-[#76b9ed]">
        <svg viewBox="0 0 24 22" className="h-[20px] w-[23px]">
          <path d="M1 2H9L11 4H23V19H1Z" fill="#e5a726" />
          <path d="M1 5H23V19.500H1Z" fill="#ffd869" />
          <path d="M5 21V15Q5 12.500 7.500 12.500H17Q19.500 12.500 19.500 15V21H16V16H8.500V21Z" fill="#3f9ae0" />
        </svg>
      </Slot>
      <Slot w={52}>
        <div className="flex h-[24px] w-[25px] items-center justify-center rounded-[4px] bg-[#7d7d7d]">
          <svg viewBox="0 0 24 24" className="h-[23px] w-[23px]">
            <path d="M8 21V11Q8 5 12.500 5Q17 5 17 10Q17 14 13 15L18.500 19.500" fill="none" stroke="#eee" strokeWidth="5.500" />
            <path d="M8 20.500V11Q8 5 12.500 5Q17 5 17 10Q17 15 12.500 15Q10.500 15 9.500 14" fill="none" stroke="#111" strokeWidth="3" />
            <circle cx="12.500" cy="10" r="2.600" fill="#8a8a8a" />
          </svg>
        </div>
      </Slot>
      <Slot w={52}>
        <div className="mb-[2px] flex h-[22px] w-[23px] items-center justify-center border-[1.500px] border-[#d9a600] bg-[#241c00]">
          <Fit w={13} className="text-[13px] font-bold text-[#e8b200]">Br</Fit>
        </div>
      </Slot>
      <Slot w={52}>
        <svg viewBox="0 0 20 22" className="absolute h-[21px] w-[20px]">
          <path d="M3 0H17Q20 0 20 3V22L15 18.500H3Q0 18.500 0 15.500V3Q0 0 3 0Z" fill="#7a8ad0" />
        </svg>
        <FaDiscord className="relative mb-[2px] h-[14px] w-[14px] text-white" />
      </Slot>
      <Slot w={52}>
        <div className="mb-[2px] flex h-[22px] w-[23px] items-center justify-center border-[1.500px] border-[#78a8ea] bg-[#060a4c]">
          <Fit w={13} className="text-[13px] font-bold text-[#8ab8f5]">Ps</Fit>
        </div>
      </Slot>
      <Slot w={51} bar="w-[51px] bg-[#76b9ed]" active>
        <div className="flex h-[23px] w-[23px] items-center justify-center rounded-full border border-[#bbb] bg-[#2c2c2c]">
          <ULogo className="h-[15px] w-[16px]" />
        </div>
      </Slot>
      <Slot w={52} bar="w-[43px] bg-[#76b9ed]">
        <svg viewBox="0 0 22 24" className="h-[22px] w-[22px]">
          <path d="M11 0Q21.500 1.500 21.500 11Q21 19 11 24Q1 19 .5 11Q.5 1.500 11 0Z" fill="#0b63f0" />
          <circle cx="11" cy="10" r="3.600" fill="none" stroke="#fff" strokeWidth="2.400" />
          <path d="M9.800 13H12.200V19H9.800Z" fill="#fff" />
        </svg>
      </Slot>
      <Slot w={52} bar="w-[43px] bg-[#76b9ed]">
        <div className="flex h-[23px] w-[23px] items-end bg-[#141414] ring-1 ring-white ring-inset">
          <svg viewBox="0 0 23 23" className="h-[23px] w-[23px]">
            <path d="M1 20L9.500 7L14 14L16.500 11L22 18V22H1Z" fill="#fff" />
            <path d="M14 14L16.500 18.500" stroke="#141414" strokeWidth="1" />
          </svg>
        </div>
      </Slot>

      <div className="ml-auto flex items-center font-['Open_Sans'] text-[12px] text-white">
        <svg viewBox="0 0 12 7" className="h-[7px] w-[12px]"><path d="M1 6L6 1L11 6" fill="none" stroke="#fff" strokeWidth="1.300" /></svg>
        <svg viewBox="0 0 16 16" className="ml-[11px] h-[16px] w-[16px]">
          <rect width="16" height="16" fill="#3f3f3f" />
          <path d="M2 14.500L1.500 7.500L3 4L8 3.500L11.500 6L13 8V12L10.500 10.500L8 11.500L9.500 14.500H2" fill="none" stroke="#7ed321" strokeWidth="1.700" strokeDasharray="3 .6" />
        </svg>
        <svg viewBox="0 0 17 14" className="ml-[9px] h-[13px] w-[16px]">
          <path d="M5 4H15V12H4V9" fill="none" stroke="#fff" strokeWidth="1.200" />
          <path d="M7 6H13.500V10.500H7ZM15.500 6.500H16.800V9.500H15.500ZM1 2H6V5L3.500 7L1 5ZM1.500 0H2.500V2H1.500ZM4.500 0H5.500V2H4.500Z" fill="#fff" />
        </svg>
        <svg viewBox="0 0 14 14" className="ml-[11px] h-[14px] w-[14px]">
          <path d="M1 13Q1.500 2 13 1M4 13Q4.500 5 13 4.500M7 13Q7.500 8.500 13 8" fill="none" stroke="#ccc" strokeWidth="1.100" />
          <circle cx="11.500" cy="11.800" r="1.500" fill="#fff" />
        </svg>
        <svg viewBox="0 0 17 14" className="ml-[8px] h-[13px] w-[16px]">
          <path d="M.8 4.800H3.500L6.500 1.500V12.500L3.500 9.200H.8Z" fill="none" stroke="#ccc" strokeWidth="1.100" />
          <path d="M9 5Q10.300 7 9 9M11.300 3.300Q13.700 7 11.300 10.700M13.700 1.500Q17 7 13.700 12.500" fill="none" stroke="#777" strokeWidth="1.100" />
        </svg>
        <svg viewBox="0 0 20 20" className="ml-[13px] h-[20px] w-[20px]">
          <path d="M8 15.500L13 2.500Q14.500 .5 15.500 3L10.500 16L7.500 18.500ZM9 13Q5 10.500 2.500 13.500Q0 17 3 18.500Q6 19 8 15.500M11 14.500Q16 13.500 18.500 9.500Q18.500 7 14 9" fill="none" stroke="#eee" strokeWidth="1.300" />
        </svg>
        <Fit w={22} className="ml-[14px]">POL</Fit>
        <div className="ml-[16px] flex w-[66px] flex-col items-center gap-[7px] pt-[1px]">
          <Fit w={31}>02:02</Fit>
          <Fit w={66}>2020-02-26</Fit>
        </div>
        <div className="relative mr-[21px] ml-[20px] h-[24px] w-[17px]">
          <svg viewBox="0 0 17 17" className="h-[17px] w-[17px]">
            <path d="M0 0H17V13H13L10 16.500V13H0Z" fill="#fff" />
            <path d="M3 3.500H14M3 6.500H14M3 9.500H9" stroke="#222" strokeWidth="1.200" />
          </svg>
          <div className="absolute top-[8px] left-[8px] flex h-[16px] w-[16px] items-center justify-center rounded-full border border-[#888] bg-[#333] text-[11px] leading-none text-white">2</div>
        </div>
        <div className="mr-[4px] h-full w-px bg-[#6a6a6a]" />
      </div>
    </div>
  );
}

export default function App() {
  return (
    <div className="flex h-[1080px] w-[1920px] flex-col overflow-hidden bg-[#1d1d1d] font-[Roboto,sans-serif]">
      {/* editor window behind */}
      <div className="relative flex h-[28px] shrink-0 items-start bg-[repeating-linear-gradient(135deg,#262626_0_20px,#1b1b1b_20px_33px)]">
        <div className="flex h-full w-[38px] items-start bg-[#1e1e1e]">
          <ULogo className="mt-[3px] ml-[1px] h-[20px] w-[23px]" />
        </div>
        <div className="flex h-[27px] w-[220px] self-end bg-linear-to-b from-[#8a8a8a] to-[#757575] pt-[5px] pl-[26px] [clip-path:path('M0_27C9_26_9_22_14_8Q17_0_22_0H198Q205_0_208_8C214_22_214_26_220_27Z')]">
          <Fit w={53} className={"text-[13.500px] text-[#ececec] " + SH}>Level_01*</Fit>
        </div>
        <div className="mr-[6px] ml-auto h-[24px] w-[192px] rounded-b-[5px] bg-black pt-[3px] pl-[14px]">
          <Fit w={160} className="text-[17.500px] text-[#8d8d8d]">z_01_Anna_Pytlewska</Fit>
        </div>
        <div className="mr-[4px] flex gap-px">
          <WinButton w={27} kind="min" />
          <WinButton w={23} kind="restore" />
          <WinButton w={43} kind="close" />
        </div>
        <div className="absolute top-[-11px] left-[1584px] h-[45px] w-[48px] overflow-hidden">
          <div className="flex h-[48px] w-[48px] items-center justify-center rounded-full bg-[radial-gradient(circle,#0b2a0b_30%,#075a07_65%,#0d7f0d_72%)]">
            <div className="flex h-[22px] w-[22px] items-center justify-center rounded-full border-[1.500px] border-[#19e619] bg-[#0a3a0a]">
              <Cap className="h-[15px] w-[16px]" />
            </div>
          </div>
        </div>
      </div>
      <div className="flex h-[6px] shrink-0 overflow-hidden border-t border-black bg-[#262626]">
        <div className="flex pl-[12px] text-[13px] leading-none text-[#ddd]">
          <span className="w-[39px] pt-[1px]">File</span>
          <span className="w-[42px] pt-[1px]">Edit</span>
          <span className="w-[65px] pt-[1px]">Window</span>
          <span className="pt-[1px]">Help</span>
        </div>
      </div>

      {/* blueprint editor window */}
      <div className="relative flex h-[1004px] shrink-0 flex-col rounded-t-[3px] border-t border-b border-[#6b6b6b] bg-[#232323]">
        <div className="h-[4px] shrink-0 bg-[#232323]" />
        <div className="mr-[6px] ml-[3px] flex h-[37px] shrink-0 items-end bg-linear-to-b from-[#4e4e4e] via-[#2d2d2d] to-[#212121]">
          <ULogo className="mb-[13px] ml-[1px] h-[20px] w-[24px]" />
          <div className="ml-[14px] flex h-[25px] w-[220px] items-center bg-linear-to-b from-[#8d8d8d] to-[#757575] pb-[2px] pl-[17px] [clip-path:path('M0_25C9_24_9_20_12_8Q15_0_20_0H198Q205_0_208_8C212_20_213_24_220_25Z')]">
            <div className="flex h-[17px] w-[19px] items-center justify-center border-b-2 border-[#2f5fc0] bg-[#38486a]">
              <BookIcon className="h-[14px] w-[16px]" />
            </div>
            <Fit w={54} className={"ml-[5px] text-[13.500px] text-[#ececec] " + SH}>Level_01*</Fit>
            <Cross className="mr-[22px] ml-auto opacity-80" />
          </div>
        </div>
        <div className="mr-[5px] ml-[3px] flex h-[20px] shrink-0 items-center border border-black bg-linear-to-b from-[#272727] to-[#1b1b1b] pb-[2px] pl-[10px] text-[13.500px] text-[#ddd]">
          <Fit w={19}>File</Fit>
          <Fit w={21} className="ml-[21px]">Edit</Fit>
          <Fit w={26} className="ml-[21px]">View</Fit>
          <Fit w={35} className="ml-[21px]">Debug</Fit>
          <Fit w={44} className="ml-[21px]">Window</Fit>
          <Fit w={24} className="ml-[21px]">Help</Fit>
        </div>
        <div className="flex h-[936px] shrink-0 gap-[5px] pt-[2px] pr-[7px] pl-[4px]">
          <LeftPanel />
          <div className="ml-[1px] flex w-[1680px] shrink-0 flex-col">
            <div className="relative flex h-[65px] shrink-0 rounded-b-[3px] bg-[#606060] p-[2px]">
              <div className="flex h-[61px] w-[651px] rounded-[3px] bg-linear-to-b from-[#3b3b3b] to-[#424242]">
                <Tool w={57} label="Compile" lw={45} icon={<CompileIcon />} />
                <div className="flex w-[29px] items-center justify-center"><Down className="border-t-[#ccc]" /></div>
                <Sep />
                <Tool w={54} label="Save" lw={26} icon={<SaveIcon />} />
                <Tool w={57} label="Browse" lw={40} icon={<BrowseIcon />} />
                <Sep />
                <Tool w={52} label="Find" lw={24} icon={<FindIcon />} />
                <div className="w-[3px]" />
                <Sep />
                <Tool w={95} label="Class Settings" lw={77} icon={<SettingsIcon />} />
                <Tool w={97} label="Class Defaults" lw={78} icon={<DefaultsIcon />} />
                <Sep />
                <Tool w={54} label="Play" lw={24} icon={<PlayIcon />} />
                <div className="flex w-[30px] items-center justify-center"><Down className="border-x-[4px] border-t-[4px] border-t-[#ccc]" /></div>
                <div className="-ml-px flex flex-col pt-[12px]">
                  <div className="flex items-center gap-[6px]">
                    <div className="flex h-[26px] w-[87px] items-center rounded-[2px] bg-[#dedede] pb-[2px] pl-[7px]">
                      <Fit w={61} className="text-[13.500px] text-[#111]">Level_0120</Fit>
                      <Down className="mt-[2px] ml-[2px] border-x-[4px] border-t-[#111]" />
                    </div>
                    <svg viewBox="0 0 14 14" className="mb-[1px] h-[14px] w-[14px]">
                      <circle cx="8" cy="6" r="4.500" fill="none" stroke="#bbb" strokeWidth="2" />
                      <path d="M5 9L1.500 12.500" stroke="#bbb" strokeWidth="2.400" />
                    </svg>
                  </div>
                  <Fit w={65} className="mt-[2px] ml-[24px] text-[13.500px] text-[#ddd]">Debug Filter</Fit>
                </div>
              </div>
              <div className="absolute top-0 left-0 h-[9px] w-[9px] bg-[#b58d26] [clip-path:polygon(0_0,100%_0,0_100%)]" />
            </div>
            <div className="mt-[5px] ml-[4px] flex h-[23px] w-[158px] shrink-0 items-center rounded-t-[3px] bg-[#606060] pb-[2px]">
              <GraphIcon className="ml-[6px] h-[14px] w-[18px]" />
              <Fit w={66} className={"ml-[5px] text-[13.500px] text-[#e4e4e4] " + SH}>Event Graph</Fit>
              <Cross className="mr-[10px] ml-auto" />
            </div>
            <div className="h-[840px] shrink-0 rounded-b-[3px] border-2 border-[#606060]">
              <GraphCanvas />
            </div>
          </div>
          <DetailsPanel />
        </div>

        {/* tutorial badge with the caption buttons on top */}
        <div className="absolute top-0 left-[1761px] h-[60px] w-[72px] overflow-hidden">
          <div className="mt-[-13px] flex h-[72px] w-[72px] items-center justify-center rounded-full bg-[#0c5a0c]/35">
            <div className="flex h-[58px] w-[58px] items-center justify-center rounded-full border border-[#13a013] bg-[radial-gradient(circle,rgba(20,30,20,0.6)_30%,rgba(10,110,10,0.75)_100%)]">
              <Cap className="h-[16px] w-[17px]" />
            </div>
          </div>
        </div>
        <div className="absolute top-[4px] right-[8px] flex gap-px">
          <WinButton w={26} kind="min" />
          <WinButton w={23} kind="max" />
          <WinButton w={44} kind="close" />
        </div>
      </div>

      <Taskbar />

      <svg viewBox="0 0 12 19" className="pointer-events-none absolute top-[849px] left-[1839px] h-[19px] w-[12px]">
        <path d="M.6 .8V15.500L4 12.300L6.300 17.800L8.800 16.800L6.500 11.300H11.200Z" fill="#fff" stroke="#111" strokeWidth=".9" />
      </svg>
    </div>
  );
}
